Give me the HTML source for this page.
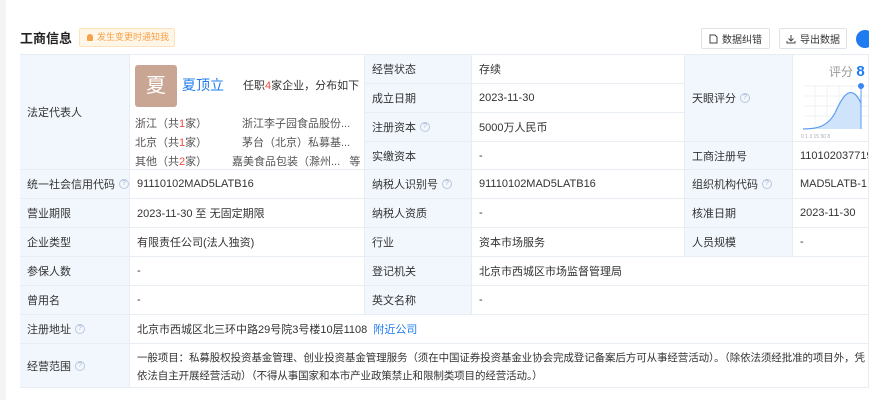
<!DOCTYPE html>
<html><head><meta charset="utf-8"><style>
*{margin:0;padding:0;box-sizing:border-box}
body{width:869px;height:400px;overflow:hidden;background:#fff;font-family:"Liberation Sans","Noto Sans CJK SC",sans-serif;font-size:11px;color:#333;position:relative}
.strip{position:absolute;left:0;top:0;width:6px;height:400px;background:#f3f4f6}
.a{position:absolute;white-space:nowrap}
.c{position:absolute;border-right:1px solid #e8edf3;border-bottom:1px solid #e8edf3;padding-left:7px;display:flex;align-items:center;white-space:nowrap;overflow:hidden}
.l{background:#f2f7fd;color:#333}
.q{display:inline-block;width:10px;height:10px;border:1px solid #b9c8dd;border-radius:50%;font-size:7px;line-height:8px;text-align:center;color:#9fb3cc;margin-left:4px}
.btn{position:absolute;top:28px;height:21px;border:1px solid #dfe2e6;border-radius:2px;font-size:10px;color:#333;display:flex;align-items:center;justify-content:center;gap:4px}
.r{color:#f04a3e}
</style></head><body>
<div class="strip"></div>
<div class="a" style="left:20px;top:28px;font-size:13px;color:#222;font-weight:bold">工商信息</div>
<div class="a" style="left:79px;top:28px;height:19px;width:96px;background:#fff6e8;border:1px solid #fde3bd;border-radius:2px;color:#f6a24a;font-size:9px;line-height:17px;padding-left:7px"><span style="display:inline-block;width:6px;height:7px;background:#f6a24a;border-radius:3px 3px 1px 1px;vertical-align:-1px;margin-right:4px"></span>发生变更时通知我</div>
<div class="btn" style="left:701px;width:69px"><svg width="9" height="10" viewBox="0 0 9 10"><path d="M1 1h5l2 2v6H1z" fill="none" stroke="#444"/></svg>数据纠错</div>
<div class="btn" style="left:779px;width:68px"><svg width="10" height="10" viewBox="0 0 10 10"><path d="M5 1v6M2.5 4.5L5 7l2.5-2.5M1 7v2h8V7" fill="none" stroke="#444"/></svg>导出数据</div>
<div class="a" style="left:856px;top:30px;width:18px;height:18px;border-radius:50%;background:#1e7cf0"></div>

<div style="position:absolute;left:20px;top:54px;width:849px;height:1px;background:#e8edf3"></div>
<div class="c l" style="left:20px;top:55px;width:110px;height:115px">法定代表人</div>
<div class="c" style="left:130px;top:55px;width:235px;height:115px;display:block;padding:0">
 <div class="a" style="left:5px;top:10px;width:42px;height:42px;background:#c9a593;border-radius:3px;color:#fff;font-size:20px;text-align:center;line-height:42px">夏</div>
 <div class="a" style="left:52px;top:20px;font-size:14px;color:#1e7cf0">夏顶立</div>
 <div class="a" style="left:113px;top:22px">任职<span class="r">4</span>家企业，分布如下</div>
 <div class="a" style="left:5px;top:60px;color:#555">浙江（共<span class="r">1</span>家）</div>
 <div class="a" style="left:112px;top:60px;color:#555">浙江李子园食品股份...</div>
 <div class="a" style="left:5px;top:79px;color:#555">北京（共<span class="r">1</span>家）</div>
 <div class="a" style="left:112px;top:79px;color:#555">茅台（北京）私募基...</div>
 <div class="a" style="left:5px;top:98px;color:#555">其他（共<span class="r">2</span>家）</div>
 <div class="a" style="left:102px;top:98px;color:#555">嘉美食品包装（滁州...&nbsp;&nbsp;&nbsp;等</div>
</div>
<div class="c l" style="left:365px;top:55px;width:107px;height:29px">经营状态</div>
<div class="c" style="left:472px;top:55px;width:213px;height:29px">存续</div>
<div class="c l" style="left:365px;top:84px;width:107px;height:29px">成立日期</div>
<div class="c" style="left:472px;top:84px;width:213px;height:29px">2023-11-30</div>
<div class="c l" style="left:365px;top:113px;width:107px;height:29px">注册资本<span class="q">?</span></div>
<div class="c" style="left:472px;top:113px;width:213px;height:29px">5000万人民币</div>
<div class="c l" style="left:365px;top:142px;width:107px;height:28px">实缴资本</div>
<div class="c" style="left:472px;top:142px;width:213px;height:28px">-</div>
<div class="c l" style="left:685px;top:55px;width:108px;height:87px">天眼评分<span class="q">?</span></div>
<div class="c" style="left:793px;top:55px;width:76px;height:87px;display:block;padding:0">
 <div class="a" style="left:36px;top:8px;color:#999;font-size:12px">评分 <b style="color:#1e7cf0;font-size:15px">8</b></div>
 <svg class="a" style="left:0;top:26px" width="76" height="60" viewBox="0 0 76 60">
  <g stroke="#eef1f5" stroke-width="1"><line x1="12" y1="5" x2="76" y2="5"/><line x1="12" y1="15" x2="76" y2="15"/><line x1="12" y1="25" x2="76" y2="25"/><line x1="12" y1="35" x2="76" y2="35"/><line x1="22" y1="5" x2="22" y2="48"/><line x1="34" y1="5" x2="34" y2="48"/><line x1="46" y1="5" x2="46" y2="48"/><line x1="58" y1="5" x2="58" y2="48"/></g>
  <path d="M10 48 C25 48 35 45 42 32 C50 14 55 10 60 12 C64 14 66 18 68 22 L68 48 Z" fill="#cfe4fb"/>
  <path d="M10 48 C25 48 35 45 42 32 C50 14 55 10 60 12 C64 14 66 18 68 22" stroke="#5a9cf0" stroke-width="1.2" fill="none"/>
  <line x1="68" y1="4" x2="68" y2="48" stroke="#5a9cf0"/><circle cx="68" cy="5" r="3" fill="#3d85ee"/>
  <text x="8" y="57" font-size="5" fill="#aab">0  1  3  15 50 8</text>
 </svg>
</div>
<div class="c l" style="left:685px;top:142px;width:108px;height:28px">工商注册号</div>
<div class="c" style="left:793px;top:142px;width:76px;height:28px">110102037719</div>

<div class="c l" style="left:20px;top:170px;width:110px;height:29px">统一社会信用代码<span class="q">?</span></div>
<div class="c" style="left:130px;top:170px;width:235px;height:29px">91110102MAD5LATB16</div>
<div class="c l" style="left:365px;top:170px;width:107px;height:29px">纳税人识别号<span class="q">?</span></div>
<div class="c" style="left:472px;top:170px;width:213px;height:29px">91110102MAD5LATB16</div>
<div class="c l" style="left:685px;top:170px;width:108px;height:29px">组织机构代码<span class="q">?</span></div>
<div class="c" style="left:793px;top:170px;width:76px;height:29px">MAD5LATB-1</div>

<div class="c l" style="left:20px;top:199px;width:110px;height:29px">营业期限</div>
<div class="c" style="left:130px;top:199px;width:235px;height:29px">2023-11-30 至 无固定期限</div>
<div class="c l" style="left:365px;top:199px;width:107px;height:29px">纳税人资质</div>
<div class="c" style="left:472px;top:199px;width:213px;height:29px">-</div>
<div class="c l" style="left:685px;top:199px;width:108px;height:29px">核准日期</div>
<div class="c" style="left:793px;top:199px;width:76px;height:29px">2023-11-30</div>

<div class="c l" style="left:20px;top:228px;width:110px;height:29px">企业类型</div>
<div class="c" style="left:130px;top:228px;width:235px;height:29px">有限责任公司(法人独资)</div>
<div class="c l" style="left:365px;top:228px;width:107px;height:29px">行业</div>
<div class="c" style="left:472px;top:228px;width:213px;height:29px">资本市场服务</div>
<div class="c l" style="left:685px;top:228px;width:108px;height:29px">人员规模</div>
<div class="c" style="left:793px;top:228px;width:76px;height:29px">-</div>

<div class="c l" style="left:20px;top:257px;width:110px;height:29px">参保人数</div>
<div class="c" style="left:130px;top:257px;width:235px;height:29px">-</div>
<div class="c l" style="left:365px;top:257px;width:107px;height:29px">登记机关</div>
<div class="c" style="left:472px;top:257px;width:397px;height:29px">北京市西城区市场监督管理局</div>

<div class="c l" style="left:20px;top:286px;width:110px;height:29px">曾用名</div>
<div class="c" style="left:130px;top:286px;width:235px;height:29px">-</div>
<div class="c l" style="left:365px;top:286px;width:107px;height:29px">英文名称</div>
<div class="c" style="left:472px;top:286px;width:397px;height:29px">-</div>

<div class="c l" style="left:20px;top:315px;width:110px;height:29px">注册地址<span class="q">?</span></div>
<div class="c" style="left:130px;top:315px;width:739px;height:29px">北京市西城区北三环中路29号院3号楼10层1108&nbsp;&nbsp;<span style="color:#1e7cf0">附近公司</span></div>

<div class="c l" style="left:20px;top:344px;width:110px;height:44px">经营范围<span class="q">?</span></div>
<div class="c" style="left:130px;top:344px;width:739px;height:44px;display:block;padding:5px 0 0 7px;line-height:18px;font-size:10.5px;letter-spacing:-0.1px">一般项目：私募股权投资基金管理、创业投资基金管理服务（须在中国证券投资基金业协会完成登记备案后方可从事经营活动）。（除依法须经批准的项目外，凭<br>依法自主开展经营活动）（不得从事国家和本市产业政策禁止和限制类项目的经营活动。）</div>
</body></html>
